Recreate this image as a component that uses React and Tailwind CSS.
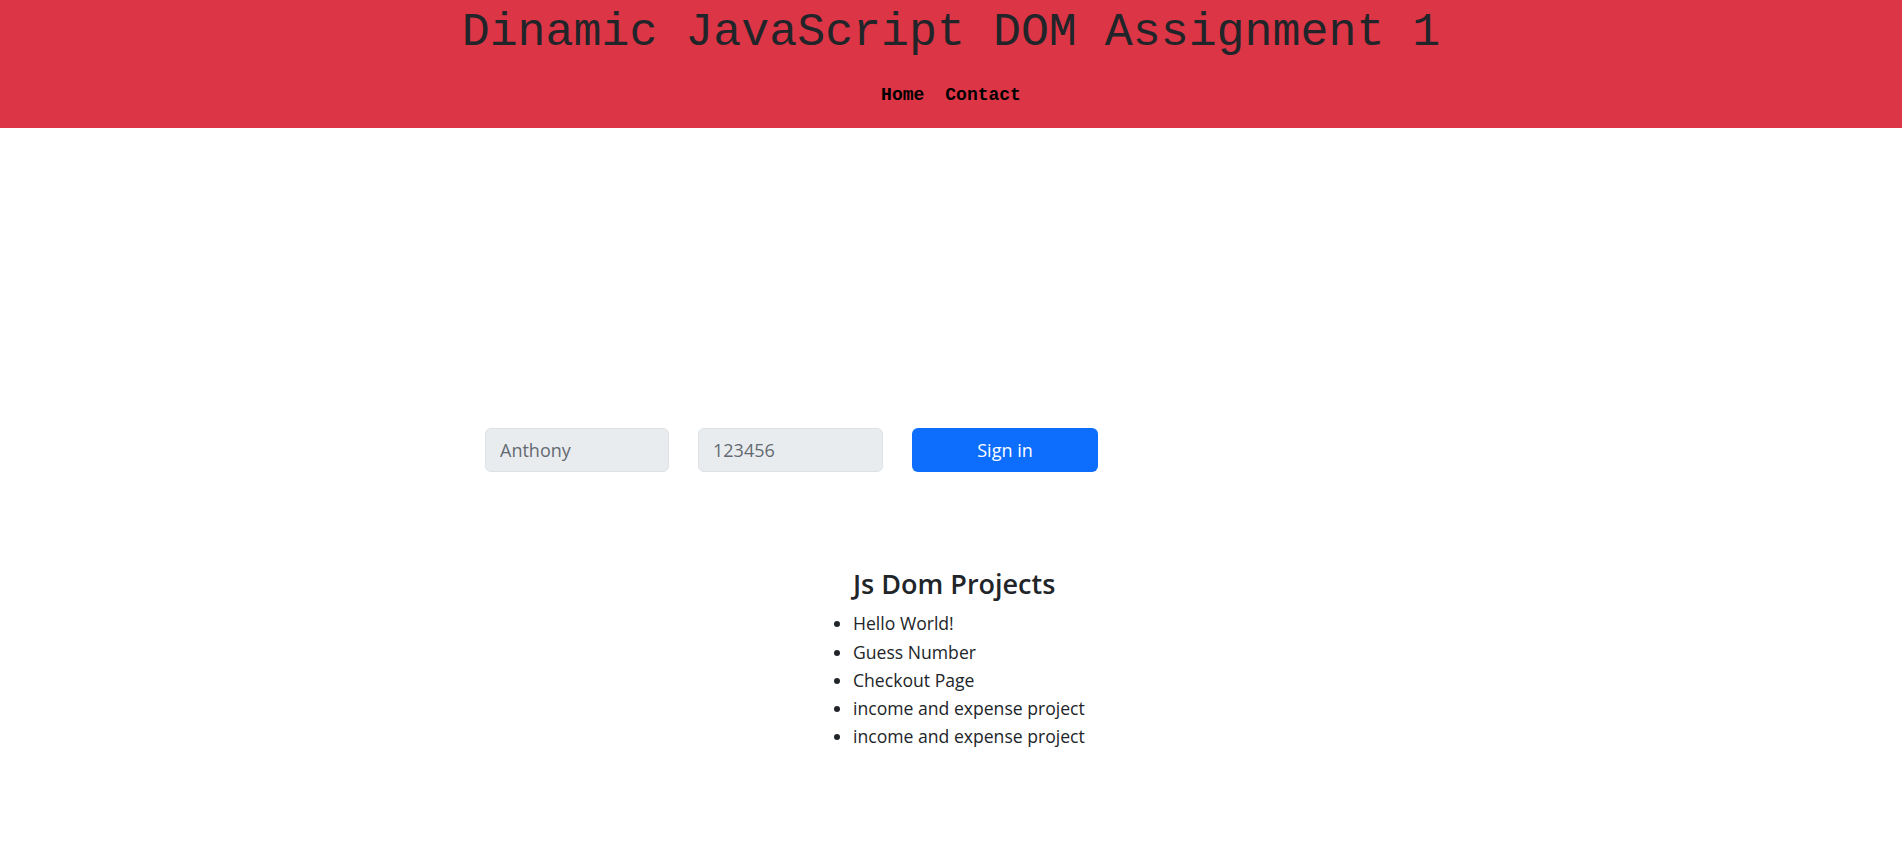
export default function App() {
  const items = [
    "Hello World!",
    "Guess Number",
    "Checkout Page",
    "income and expense project",
    "income and expense project",
  ];
  return (
    <div className="min-h-[867px] bg-white text-[#212529]">
      <header className="bg-[#dc3545] h-[128px] pt-[5px] flex flex-col items-center">
        <h1 className="font-['Liberation_Mono',_'Courier_New',_monospace] text-[46.6px] leading-[56px] font-normal text-[#212529]">
          Dinamic JavaScript DOM Assignment 1
        </h1>
        <nav className="mt-[21px] flex gap-[21px] font-['Liberation_Mono',_'Courier_New',_monospace] text-[18px] leading-[27px] font-bold text-black">
          <a href="#">Home</a>
          <a href="#">Contact</a>
        </nav>
      </header>

      <main className="font-['Open_Sans',_'Noto_Sans',_sans-serif]">
        <div className="pt-[300px] pl-[485px] flex gap-[29px]">
          <input
            disabled
            placeholder="Anthony"
            className="w-[184px] h-[44px] rounded-[6px] border border-[#dee2e6] bg-[#e9ecef] px-[14px] text-[18px] placeholder:text-[#636a71] outline-none"
          />
          <input
            disabled
            placeholder="123456"
            className="w-[185px] h-[44px] rounded-[6px] border border-[#dee2e6] bg-[#e9ecef] px-[14px] text-[18px] placeholder:text-[#636a71] outline-none"
          />
          <button className="w-[186px] h-[44px] rounded-[6px] bg-[#0d6efd] text-white text-[18px]">
            Sign in
          </button>
        </div>

        <div className="mt-[96px] pl-[837px]">
          <h3 className="pl-[16px] text-[27px] leading-[1.2] font-semibold">
            Js Dom Projects
          </h3>
          <ul className="mt-[9px] list-disc pl-[16px] text-[17.6px] leading-[28.2px]">
            {items.map((t, i) => (
              <li key={i}>{t}</li>
            ))}
          </ul>
        </div>
      </main>
    </div>
  );
}
